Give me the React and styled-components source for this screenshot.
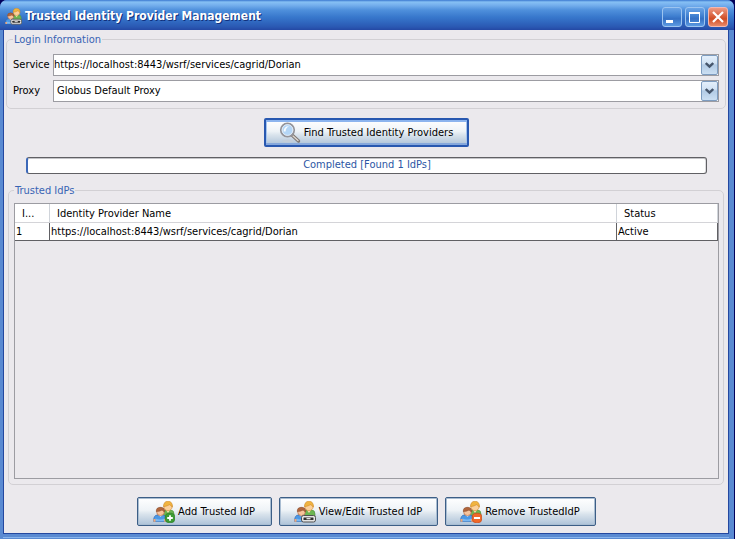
import React from "react";
import styled, { createGlobalStyle, css } from "styled-components";

const GlobalStyle = createGlobalStyle`
  *, *::before, *::after { box-sizing: border-box; }
  body {
    margin: 0;
    background: #02025c;
    color: #000;
    font: 11px/14px "DejaVu Sans Condensed", "DejaVu Sans", sans-serif;
  }
  button, select, input { font: inherit; color: inherit; margin: 0; }
`;

const Window = styled.div`
  display: flex;
  flex-direction: column;
  height: 100vh;
  min-height: fit-content;
  margin-right: 1px;
  border-radius: 7px 7px 0 0;
  overflow: hidden;
  background: #5a8ad2;
`;

const TitleBar = styled.header`
  flex: none;
  display: flex;
  align-items: center;
  gap: 3px;
  height: 30px;
  padding: 2px 6px 0 5px;
  background: linear-gradient(#3b78d0 0, #86c0f4 2px, #76b0ee 5px, #4f90dc 10px, #3878cc 17px, #3068c0 22px, #2a58b2 27px, #2448a4 30px);
`;

const Title = styled.h1`
  flex: 1;
  margin: 0;
  color: #fff;
  font: bold 12px/18px "DejaVu Sans Condensed", "DejaVu Sans", sans-serif;
  text-shadow: 1px 1px 0 #10307c;
  white-space: nowrap;
`;

const Controls = styled.div`
  display: flex;
  gap: 3px;
  padding-top: 1px;
`;

const ControlButton = styled.button`
  display: grid;
  place-items: center;
  width: 20px;
  height: 20px;
  padding: 0;
  border: 1px solid ${(p) => (p.$close ? "#f4b8b0" : "#9cc4f0")};
  border-radius: 3px;
  background: ${(p) =>
    p.$close
      ? "linear-gradient(#ee9a84, #d8603c 45%, #d04c24 60%, #e88868)"
      : "linear-gradient(#6aa4e6, #3f7fd0 45%, #3470c4 60%, #5c9ae2)"};
`;

const Body = styled.main`
  flex: 1;
  display: flex;
  flex-direction: column;
  margin: 0 5px 5px 3px;
  padding: 1px 2px 7px 2px;
  border: 1px solid #2448a0;
  border-top: 0;
  background: #ebe9ed;
  box-shadow: 0 3px 0 #5a8ad2, 0 4px 0 #88b4ec;
`;

const Group = styled.fieldset`
  min-width: 0;
  margin: 0;
  padding: ${(p) => (p.$grow ? "5px 4px 5px 5px" : "7px 6px 6px")};
  border: 1px solid #d2d0d4;
  border-radius: 5px;
  ${(p) =>
    p.$grow &&
    css`
      flex: 1;
      display: flex;
      flex-direction: column;
      margin: 8px 2px 0;
    `}
`;

const Legend = styled.legend`
  padding: 2px 1px 0;
  color: #3864b4;
`;

const Form = styled.div`
  display: grid;
  grid-template-columns: 36px minmax(0, 1fr);
  column-gap: 4px;
  row-gap: 4px;
  align-items: center;
`;

const Combo = styled.div`
  display: flex;
  height: 22px;
  border: 1px solid #9c9ca2;
  background: #fff;
`;

const ComboSelect = styled.select`
  flex: 1;
  min-width: 0;
  padding: 0 0 0 ${(p) => (p.$inset ? "3px" : "0")};
  border: 0;
  border-radius: 0;
  outline: 0;
  appearance: none;
  background: transparent;
`;

const ComboArrow = styled.button`
  display: grid;
  place-items: center;
  width: 17px;
  padding: 0;
  border: 1px solid #7d9cc0;
  border-radius: 2px;
  background: linear-gradient(#e4effb, #d2e3f5 40%, #b2cbe5 50%, #cbdff3);
`;

const PushButton = styled.button`
  display: flex;
  align-items: center;
  justify-content: center;
  gap: 3px;
  height: 29px;
  width: ${(p) => p.$width};
  padding: 0;
  white-space: nowrap;
  border: ${(p) => (p.$focused ? "2px solid #2858b0" : "1px solid #3c5e86")};
  border-radius: 2px;
  background: linear-gradient(#ffffff, #eef3f7 45%, #d9e3ec 60%, #adc2d8);
  box-shadow: ${(p) =>
    p.$focused
      ? "inset 0 2px 0 #8cb4ee, inset 0 -2px 0 #86a8dc, inset 1px 0 0 #a4c4ee, inset -1px 0 0 #a4c4ee"
      : "inset 0 0 0 1px #a9bdd2"};
`;

const FindArea = styled.div`
  display: flex;
  justify-content: center;
  padding: 9px 0 10px;
`;

const Progress = styled.div`
  height: 17px;
  margin: 0 19px 0 20px;
  border: 1px solid #606064;
  border-left: 2px solid #3c68b8;
  border-radius: 3px;
  background: #fff;
  box-shadow: inset 0 1px 0 #c4c4c8, inset -1px 0 0 #dcdcdf;
  color: #2c56a4;
  line-height: 13px;
  text-align: center;
`;

const ScrollPane = styled.div`
  flex: 1;
  border: 1px solid #9c9ca2;
`;

const Table = styled.table`
  width: 100%;
  table-layout: fixed;
  border-collapse: separate;
  border-spacing: 0;
  background: #fff;
`;

const Col = styled.col`
  width: ${(p) => p.$width};
`;

const HeadCell = styled.th`
  height: 19px;
  padding: 2px 7px 0;
  border-right: 1px solid #d0d4da;
  border-bottom: 1px solid #d4d4d8;
  font-weight: normal;
  text-align: left;
`;

const Cell = styled.td`
  height: 18px;
  padding: 0 1px;
  border-right: 1px solid #606064;
  border-bottom: 1px solid #606064;
  white-space: nowrap;
`;

const Actions = styled.footer`
  display: flex;
  justify-content: center;
  gap: 7px;
  margin-top: 12px;
`;

const Chevron = () => (
  <svg width="9" height="7" viewBox="0 0 9 7" aria-hidden="true">
    <path d="M0.8 1 4.5 4.5 8.2 1" fill="none" stroke="#46566c" strokeWidth="2.4" />
  </svg>
);

const Magnifier = () => (
  <svg width="22" height="22" viewBox="0 0 22 22" aria-hidden="true">
    <ellipse cx="9" cy="19" rx="6" ry="1.5" fill="#c4ced9" />
    <path d="m13 13 6.5 6" stroke="#7c7672" strokeWidth="3.4" strokeLinecap="round" />
    <path d="m14 14 5 4.6" stroke="#dcd6d0" strokeWidth="1.4" strokeLinecap="round" />
    <circle cx="8.5" cy="8" r="6.7" fill="#b4d6f6" stroke="#94949a" strokeWidth="1.8" />
    <circle cx="8.5" cy="8" r="5.4" fill="none" stroke="#e8eef6" strokeWidth="0.9" />
    <path d="M4.6 9.5c0-3.500 2-5.500 5.400-5.300-2.400 1.300-3.400 2.700-3.400 5.300z" fill="#f8fcff" />
  </svg>
);

const People = ({ badge, size = 22 }) => (
  <svg width={size} height={size} viewBox="0 0 22 22" aria-hidden="true">
    <path d="M9.500 20v-7.500q0-3.500 3.500-3.500h4.500q3.500 0 3.500 4v6z" fill="#6cb552" stroke="#4a8f38" strokeWidth=".6" />
    <path d="M13 9h4l-2 3z" fill="#fbe0b4" />
    <circle cx="15" cy="5.500" r="4.200" fill="#fbd09a" stroke="#d08a30" strokeWidth=".6" />
    <path d="M10.500 5.700Q10.500.2 15 .2T19.500 6Q17.500 5 17 3.500 14 5.300 10.500 5.700" fill="#f0b440" stroke="#c98222" strokeWidth=".5" />
    <path d="M.6 20.500Q.3 14.500 4 14h6.500q3 .5 2.800 6.500z" fill="#4c98e4" stroke="#2c64b0" strokeWidth=".6" />
    <path d="M2.500 17.500q4.500 2 9 0v2.800H2.500z" fill="#7ab8f2" />
    <path d="M.5 18h2v2.800H.5zM11.200 18h2v2.800h-2z" fill="#f4a878" />
    <path d="M5.500 14h4l-2 1.800z" fill="#fff" />
    <circle cx="7.500" cy="10.700" r="3.900" fill="#f8c49c" stroke="#a8603c" strokeWidth=".6" />
    <path d="M3.300 10.500Q3 6.300 7.500 6.300T11.700 11Q10 10.400 9.200 9 6.500 10.500 3.300 10.500" fill="#b0663c" stroke="#824426" strokeWidth=".5" />
    {badge === "add" && (
      <g>
        <rect x="12.200" y="12.200" width="9.600" height="9.600" rx="4" fill="#3c9c34" stroke="#2c7c28" strokeWidth=".7" />
        <path d="M17 14.200v5.600M14.200 17h5.600" stroke="#fff" strokeWidth="1.800" />
      </g>
    )}
    {badge === "remove" && (
      <g>
        <rect x="12.200" y="12.200" width="9.600" height="9.600" rx="4" fill="#f06828" stroke="#c84818" strokeWidth=".7" />
        <path d="M14 17h6" stroke="#fff" strokeWidth="2" />
      </g>
    )}
    {badge === "edit" && (
      <g>
        <rect x="7.500" y="14.500" width="14" height="6.500" rx="2" fill="#e4e4e4" stroke="#505050" />
        <rect x="9.500" y="16.500" width="10" height="2.500" rx=".5" fill="#303030" />
        <path d="M12.500 17.700h4" stroke="#f4f4f4" strokeWidth="1.200" />
      </g>
    )}
  </svg>
);

const MinimizeGlyph = () => (
  <svg width="14" height="14" viewBox="0 0 14 14" aria-hidden="true">
    <path d="M1 10h7v3H1z" fill="#fff" />
  </svg>
);

const MaximizeGlyph = () => (
  <svg width="14" height="14" viewBox="0 0 14 14" aria-hidden="true">
    <path d="M1.500 3v9.500h10V3" fill="none" stroke="#fff" />
    <path d="M1 2h11v2H1z" fill="#fff" />
  </svg>
);

const CloseGlyph = () => (
  <svg width="14" height="14" viewBox="0 0 14 14" aria-hidden="true">
    <path d="m2 2 10 10M12 2 2 12" stroke="#fff" strokeWidth="2.200" />
  </svg>
);

const providers = [
  { id: 1, name: "https://localhost:8443/wsrf/services/cagrid/Dorian", status: "Active" },
];

const ComboBox = ({ id, label, value, inset }) => (
  <>
    <label htmlFor={id}>{label}</label>
    <Combo>
      <ComboSelect id={id} $inset={inset} defaultValue={value}>
        <option>{value}</option>
      </ComboSelect>
      <ComboArrow type="button" tabIndex={-1} aria-label={`Open ${label} list`}>
        <Chevron />
      </ComboArrow>
    </Combo>
  </>
);

export default function App() {
  return (
    <>
      <GlobalStyle />
      <Window>
        <TitleBar>
          <People badge="edit" size={17} />
          <Title>Trusted Identity Provider Management</Title>
          <Controls>
            <ControlButton aria-label="Minimize"><MinimizeGlyph /></ControlButton>
            <ControlButton aria-label="Maximize"><MaximizeGlyph /></ControlButton>
            <ControlButton $close aria-label="Close"><CloseGlyph /></ControlButton>
          </Controls>
        </TitleBar>
        <Body>
          <Group>
            <Legend>Login Information</Legend>
            <Form>
              <ComboBox id="service" label="Service" value="https://localhost:8443/wsrf/services/cagrid/Dorian" />
              <ComboBox id="proxy" label="Proxy" value="Globus Default Proxy" inset />
            </Form>
          </Group>
          <FindArea>
            <PushButton $focused $width="205px">
              <Magnifier />
              Find Trusted Identity Providers
            </PushButton>
          </FindArea>
          <Progress role="progressbar" aria-label="Search progress" aria-valuetext="Completed">
            Completed [Found 1 IdPs]
          </Progress>
          <Group $grow>
            <Legend>Trusted IdPs</Legend>
            <ScrollPane>
              <Table>
                <colgroup>
                  <Col $width="35px" />
                  <Col />
                  <Col $width="101px" />
                </colgroup>
                <thead>
                  <tr>
                    <HeadCell scope="col">I...</HeadCell>
                    <HeadCell scope="col">Identity Provider Name</HeadCell>
                    <HeadCell scope="col">Status</HeadCell>
                  </tr>
                </thead>
                <tbody>
                  {providers.map((p) => (
                    <tr key={p.id}>
                      <Cell>{p.id}</Cell>
                      <Cell>{p.name}</Cell>
                      <Cell>{p.status}</Cell>
                    </tr>
                  ))}
                </tbody>
              </Table>
            </ScrollPane>
          </Group>
          <Actions>
            <PushButton $width="135px"><People badge="add" />Add Trusted IdP</PushButton>
            <PushButton $width="159px"><People badge="edit" />View/Edit Trusted IdP</PushButton>
            <PushButton $width="151px"><People badge="remove" />Remove TrustedIdP</PushButton>
          </Actions>
        </Body>
      </Window>
    </>
  );
}
